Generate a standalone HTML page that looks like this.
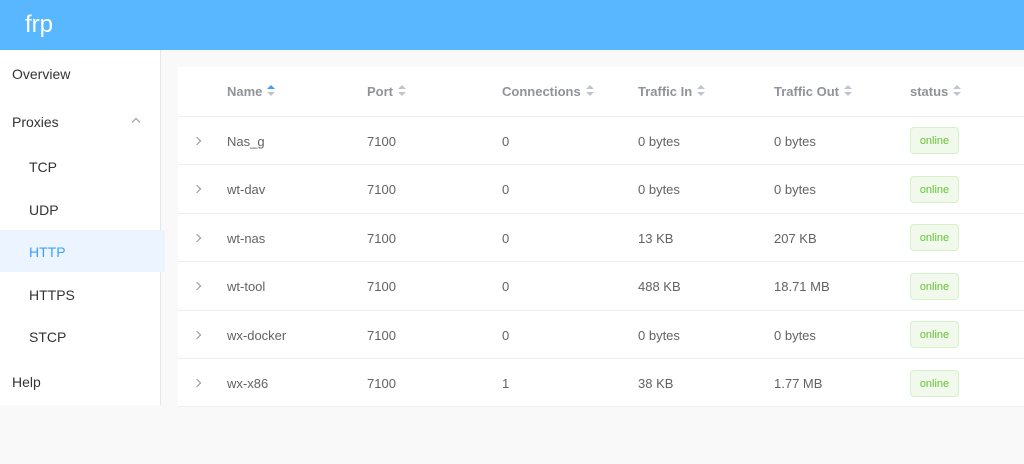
<!DOCTYPE html>
<html><head><meta charset="utf-8"><style>
*{margin:0;padding:0;box-sizing:border-box}
body{width:1024px;height:464px;background:#f9f9f9;font-family:"Liberation Sans",sans-serif;position:relative;overflow:hidden;color:#606266}
.hdr{position:absolute;left:0;top:0;width:1024px;height:50px;background:#58b7ff}
.hdr span{position:absolute;left:25px;top:11px;color:#fff;font-size:24px}
.side{position:absolute;left:0;top:50px;width:161px;height:355px;background:#fff;border-right:1px solid #e6e6e6}
.mi{position:absolute;font-size:14px;color:#333}
.act{position:absolute;left:0;top:230px;width:165px;height:42px;background:#ecf5ff}
.card{position:absolute;left:178px;top:67px;width:846px;height:340px;background:#fff}
.th{position:absolute;top:84px;font-size:13px;font-weight:bold;color:#909399}
.line{position:absolute;left:178px;width:846px;height:1px;background:#ebeef5}
.td{position:absolute;font-size:13px;color:#606266}
.tag{position:absolute;left:910px;width:49px;height:27px;border:1px solid #d7f0c9;background:#f0f9eb;border-radius:4px;color:#67c23a;font-size:11px;text-align:center;line-height:27px}
.sort{display:inline-block;width:8px;height:12px;position:relative;vertical-align:-1px;margin-left:5px}
.sort:before,.sort:after{content:"";position:absolute;left:0;border-left:4px solid transparent;border-right:4px solid transparent}
.sort:before{top:0;border-bottom:4px solid #c0c4cc}
.sort:after{top:7px;border-top:4px solid #c0c4cc}
.sort.a:before{border-bottom-color:#409eff}
.chev{position:absolute;left:194px;width:6px;height:6px;border-right:1px solid #909399;border-top:1px solid #909399;transform:rotate(45deg)}
</style></head><body>
<div class="hdr"><span>frp</span></div>
<div class="side"></div>
<div class="act"></div>
<div class="mi" style="left:12px;top:66px">Overview</div>
<div class="mi" style="left:12px;top:114px">Proxies</div>
<div style="position:absolute;left:133px;top:119px;width:6px;height:6px;border-left:1px solid #909399;border-top:1px solid #909399;transform:rotate(45deg)"></div>
<div class="mi" style="left:29px;top:159px">TCP</div>
<div class="mi" style="left:29px;top:202px">UDP</div>
<div class="mi" style="left:29px;top:244px;color:#409eff">HTTP</div>
<div class="mi" style="left:29px;top:287px">HTTPS</div>
<div class="mi" style="left:29px;top:329px">STCP</div>
<div class="mi" style="left:12px;top:374px">Help</div>
<div class="card"></div>
<div class="th" style="left:227px">Name<span class="sort a"></span></div>
<div class="th" style="left:367px">Port<span class="sort"></span></div>
<div class="th" style="left:502px">Connections<span class="sort"></span></div>
<div class="th" style="left:638px">Traffic In<span class="sort"></span></div>
<div class="th" style="left:774px">Traffic Out<span class="sort"></span></div>
<div class="th" style="left:910px">status<span class="sort"></span></div>
<div class="line" style="top:116px"></div>
<div class="line" style="top:164px"></div>
<div class="line" style="top:213px"></div>
<div class="line" style="top:261px"></div>
<div class="line" style="top:310px"></div>
<div class="line" style="top:358px"></div>
<div class="line" style="top:406px"></div>

<div class="chev" style="top:138px"></div><div class="td" style="left:227px;top:134px">Nas_g</div><div class="td" style="left:367px;top:134px">7100</div><div class="td" style="left:502px;top:134px">0</div><div class="td" style="left:638px;top:134px">0 bytes</div><div class="td" style="left:774px;top:134px">0 bytes</div><div class="tag" style="top:127px">online</div>
<div class="chev" style="top:186px"></div><div class="td" style="left:227px;top:182px">wt-dav</div><div class="td" style="left:367px;top:182px">7100</div><div class="td" style="left:502px;top:182px">0</div><div class="td" style="left:638px;top:182px">0 bytes</div><div class="td" style="left:774px;top:182px">0 bytes</div><div class="tag" style="top:176px">online</div>
<div class="chev" style="top:235px"></div><div class="td" style="left:227px;top:231px">wt-nas</div><div class="td" style="left:367px;top:231px">7100</div><div class="td" style="left:502px;top:231px">0</div><div class="td" style="left:638px;top:231px">13 KB</div><div class="td" style="left:774px;top:231px">207 KB</div><div class="tag" style="top:224px">online</div>
<div class="chev" style="top:283px"></div><div class="td" style="left:227px;top:279px">wt-tool</div><div class="td" style="left:367px;top:279px">7100</div><div class="td" style="left:502px;top:279px">0</div><div class="td" style="left:638px;top:279px">488 KB</div><div class="td" style="left:774px;top:279px">18.71 MB</div><div class="tag" style="top:273px">online</div>
<div class="chev" style="top:332px"></div><div class="td" style="left:227px;top:328px">wx-docker</div><div class="td" style="left:367px;top:328px">7100</div><div class="td" style="left:502px;top:328px">0</div><div class="td" style="left:638px;top:328px">0 bytes</div><div class="td" style="left:774px;top:328px">0 bytes</div><div class="tag" style="top:321px">online</div>
<div class="chev" style="top:380px"></div><div class="td" style="left:227px;top:376px">wx-x86</div><div class="td" style="left:367px;top:376px">7100</div><div class="td" style="left:502px;top:376px">1</div><div class="td" style="left:638px;top:376px">38 KB</div><div class="td" style="left:774px;top:376px">1.77 MB</div><div class="tag" style="top:370px">online</div>
</body></html>
